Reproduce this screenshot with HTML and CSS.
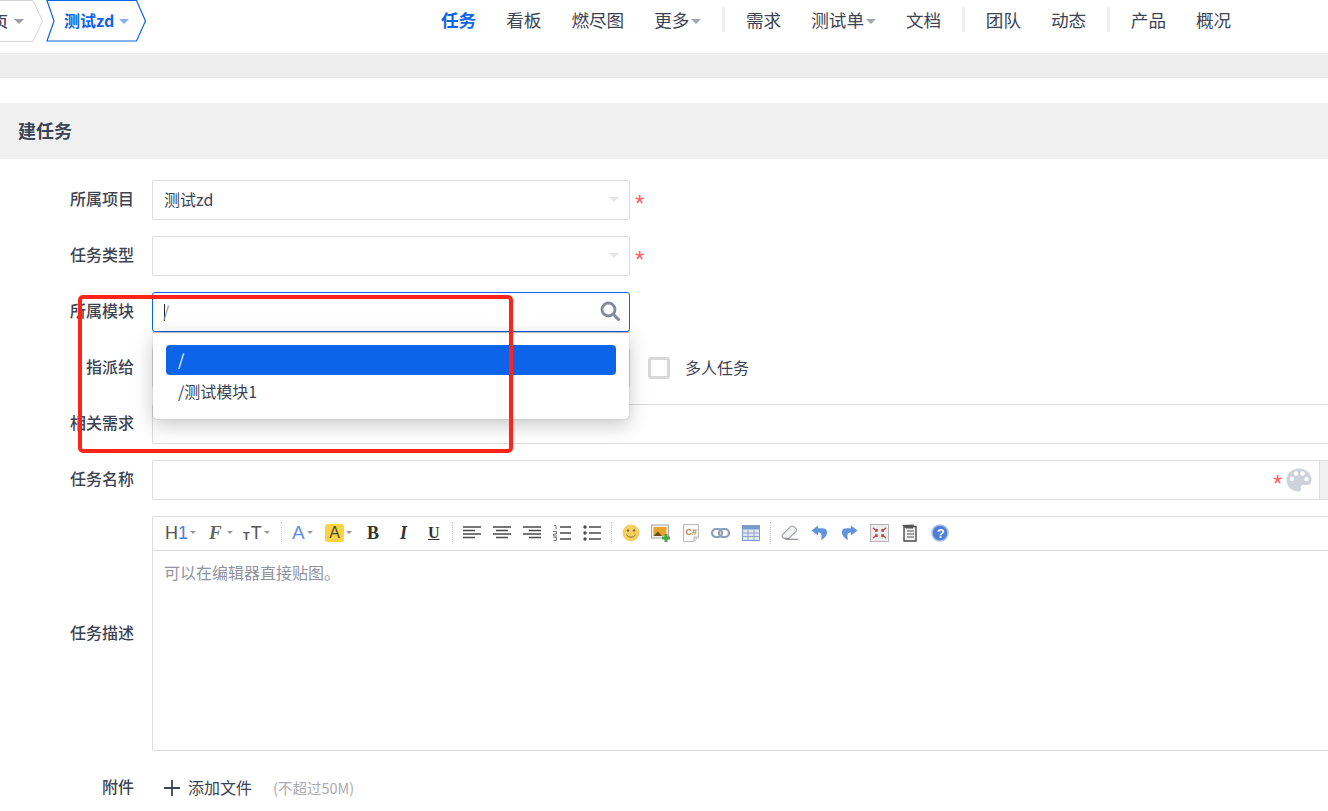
FILE: index.html
```html
<!DOCTYPE html>
<html lang="zh">
<head>
<meta charset="utf-8">
<title>建任务</title>
<link rel="stylesheet" href="styles.css">
</head>
<body>
<div class="page">
  <header class="top">
    <div class="crumbs">
      <div class="crumb crumb-home">
        <svg class="crumb-bg" width="46" height="42" viewBox="0 0 46 42"><path d="M-2 .5H33L42.500 21 33 41.500H-2" fill="none" stroke="#d4d6dc" stroke-width="1"/></svg>
        <span class="crumb-text">页</span><i class="caret caret-grey"></i>
      </div>
      <div class="crumb crumb-active">
        <svg class="crumb-bg" width="102" height="42" viewBox="0 0 102 42"><path d="M1 .5H90.500L99.500 21 90.500 41H1L8 21Z" fill="none" stroke="#0c64eb" stroke-width="1.200"/></svg>
        <span class="crumb-text">测试zd</span><i class="caret caret-blue"></i>
      </div>
    </div>
    <nav class="nav">
      <a class="nav-item active">任务</a>
      <a class="nav-item">看板</a>
      <a class="nav-item">燃尽图</a>
      <a class="nav-item">更多<i class="caret caret-nav"></i></a>
      <span class="nav-sep"></span>
      <a class="nav-item">需求</a>
      <a class="nav-item">测试单<i class="caret caret-nav"></i></a>
      <a class="nav-item">文档</a>
      <span class="nav-sep"></span>
      <a class="nav-item">团队</a>
      <a class="nav-item">动态</a>
      <span class="nav-sep"></span>
      <a class="nav-item">产品</a>
      <a class="nav-item">概况</a>
    </nav>
  </header>
  <div class="band"></div>
  <h1 class="title">建任务</h1>

  <form class="form">
    <div class="row">
      <label class="label">所属项目</label>
      <div class="field select">测试zd<i class="caret caret-pale"></i></div>
      <span class="star">*</span>
    </div>
    <div class="row">
      <label class="label">任务类型</label>
      <div class="field select"><i class="caret caret-pale"></i></div>
      <span class="star">*</span>
    </div>
    <div class="row">
      <label class="label">所属模块</label>
      <div class="select-wrap">
        <div class="field select focus"><span class="cursor"></span><span class="typed">/</span>
          <svg class="search" width="20" height="20" viewBox="0 0 20 20"><circle cx="8.500" cy="8.500" r="6.500" fill="none" stroke="#838a9d" stroke-width="2.800"/><path d="M13.500 13.500 18.500 18.500" stroke="#838a9d" stroke-width="3" stroke-linecap="round"/></svg>
        </div>
        <div class="dropdown">
          <div class="option selected">/</div>
          <div class="option">/测试模块1</div>
        </div>
      </div>
    </div>
    <div class="row">
      <label class="label">指派给</label>
      <div class="field select"></div>
      <span class="checkbox"></span>
      <span class="check-text">多人任务</span>
    </div>
    <div class="row">
      <label class="label">相关需求</label>
      <div class="field wide"></div>
    </div>
    <div class="row">
      <label class="label">任务名称</label>
      <div class="field wide name-field">
        <span class="star star-inline">*</span>
        <svg class="palette" width="26" height="24" viewBox="0 0 26 24"><path d="M13 .5C6 .5.5 5.500.5 12S6 23.500 12.500 23.500C15 23.500 15.500 22 14.800 20.500 14 18.500 15.200 17 17.500 17H21C23.800 17 25.500 15 25.500 12 25.500 5.500 20 .5 13 .5Z" fill="#cdd2dd"/><circle cx="6" cy="11" r="2.200" fill="#fff"/><circle cx="10" cy="5.500" r="2.200" fill="#fff"/><circle cx="16.500" cy="5.500" r="2.200" fill="#fff"/><circle cx="20.500" cy="11" r="2.200" fill="#fff"/></svg>
        <span class="addon"></span>
      </div>
    </div>
    <div class="row row-editor">
      <label class="label">任务描述</label>
      <div class="editor">
        <div class="toolbar">
          <span class="tool t-h1">H<b>1</b><i class="mini"></i></span>
          <span class="tool t-font"><em>F</em><i class="mini"></i></span>
          <span class="tool t-size"><small>T</small>T<i class="mini"></i></span>
          <span class="tool-sep"></span>
          <span class="tool t-color">A<i class="mini"></i></span>
          <span class="tool t-hl"><span class="hl">A</span><i class="mini"></i></span>
          <span class="tool t-b">B</span>
          <span class="tool t-i">I</span>
          <span class="tool t-u">U</span>
          <span class="tool-sep"></span>
          <svg class="ico" width="18" height="16" viewBox="0 0 18 16"><path d="M0 2H18M0 5.500H12M0 9H18M0 12.500H12" stroke="#4a4a4a" stroke-width="1.700"/></svg>
          <svg class="ico" width="18" height="16" viewBox="0 0 18 16"><path d="M0 2H18M3 5.500H15M0 9H18M3 12.500H15" stroke="#4a4a4a" stroke-width="1.700"/></svg>
          <svg class="ico" width="18" height="16" viewBox="0 0 18 16"><path d="M0 2H18M6 5.500H18M0 9H18M6 12.500H18" stroke="#4a4a4a" stroke-width="1.700"/></svg>
          <svg class="ico" width="18" height="16" viewBox="0 0 18 16"><path d="M7 2H18M7 8H18M7 14H18" stroke="#4a4a4a" stroke-width="1.500"/><path d="M1 .5H3V4M0 6.500H3.500V9H.5V11H4M.5 12.500H3.500V15.500H.5" fill="none" stroke="#777" stroke-width="1"/></svg>
          <svg class="ico" width="18" height="16" viewBox="0 0 18 16"><path d="M6 2H18M6 8H18M6 14H18" stroke="#4a4a4a" stroke-width="1.500"/><circle cx="2" cy="2" r="1.700" fill="#4a4a4a"/><circle cx="2" cy="8" r="1.700" fill="#4a4a4a"/><circle cx="2" cy="14" r="1.700" fill="#4a4a4a"/></svg>
          <span class="tool-sep sep-tight"></span>
          <svg class="ico m11" width="18" height="18" viewBox="0 0 18 18"><circle cx="9" cy="9" r="8.500" fill="#f6cf63"/><circle cx="6" cy="6.500" r="1.200" fill="#8a6a2a"/><circle cx="12" cy="6.500" r="1.200" fill="#8a6a2a"/><path d="M4.500 10.500C6 14 12 14 13.500 10.500" fill="none" stroke="#8a6a2a" stroke-width="1"/></svg>
          <svg class="ico m13" width="19" height="18" viewBox="0 0 19 18"><rect x=".5" y="1" width="17" height="13" fill="#f2f2f2" stroke="#a5a5a5"/><rect x="2.500" y="3" width="13" height="9" fill="#e8a52a"/><path d="M2.500 12 7 7.500 11 12Z" fill="#6a4a20"/><path d="M11 14H19M15 10V18" stroke="#45a845" stroke-width="3"/></svg>
          <svg class="ico" width="16" height="18" viewBox="0 0 16 18"><path d="M.5.5H15.500V13L11 17.500H.5Z" fill="#fafafa" stroke="#bbb"/><path d="M11 17.500V13H15.500" fill="#ddd" stroke="#bbb"/><text x="2.500" y="11" class="cs">C#</text></svg>
          <svg class="ico" width="19" height="10" viewBox="0 0 19 10"><rect x="1" y="1" width="10" height="8" rx="4" fill="none" stroke="#8da0bd" stroke-width="2.200"/><rect x="8" y="1" width="10" height="8" rx="4" fill="none" stroke="#8da0bd" stroke-width="2.200"/></svg>
          <svg class="ico" width="18" height="16" viewBox="0 0 18 16"><rect x=".5" y=".5" width="17" height="15" fill="#dfe8f5" stroke="#7f9cc8"/><path d="M.5 1H17.500V4.500H.5Z" fill="#7f9cc8"/><path d="M6 4.500V15M12 4.500V15M1 8H17M1 11.500H17" stroke="#8fa5c8"/></svg>
          <span class="tool-sep sep-tight"></span>
          <svg class="ico m12" width="18" height="17" viewBox="0 0 20 17"><path d="M1.500 11 10 2.500C11.500 1 13.500 1 15 2.500L16.500 4C17.500 5 17.500 6.500 16.500 7.500L8.500 15H5C2 15 .5 12.500 1.500 11Z" fill="#f3f3f3" stroke="#9a9fa8" stroke-width="1.200"/><path d="M5 16H19" stroke="#666" stroke-width="1"/></svg>
          <svg class="ico m13" width="17" height="16" viewBox="0 0 17 16"><path d="M7 .5 .5 5.500 7 10.500V7.500C10 7.500 11.500 9 10 15 15 12.500 16.500 9 16 6 15.300 3 11 3 7 3.500Z" fill="#5f93dc"/></svg>
          <svg class="ico flip" width="17" height="16" viewBox="0 0 17 16"><path d="M7 .5 .5 5.500 7 10.500V7.500C10 7.500 11.500 9 10 15 15 12.500 16.500 9 16 6 15.300 3 11 3 7 3.500Z" fill="#5f93dc"/></svg>
          <svg class="ico" width="19" height="18" viewBox="0 0 19 18"><rect x=".5" y=".5" width="18" height="17" fill="#eee" stroke="#b5b5b5"/><path d="M3 4 7 7M16 4 12 7M3 14 7 11M16 14 12 11M7 5V7H5M12 5V7H14M7 13V11H5M12 13V11H14" stroke="#c8433a" stroke-width="1.400" fill="none"/></svg>
          <svg class="ico" width="18" height="18" viewBox="0 0 18 18"><path d="M3 2.500H15V17H3Z" fill="#f2f2f2" stroke="#4a4a4a" stroke-width="1.400"/><path d="M1 1 5 4.500H12L13 .5" fill="#555"/><path d="M6 7H13M6 10H13M6 13H13" stroke="#555"/></svg>
          <svg class="ico" width="18" height="18" viewBox="0 0 18 18"><circle cx="9" cy="9" r="8" fill="#4f7fd6" stroke="#a9c0ea" stroke-width="1.500"/><text x="5.700" y="13.500" class="qm">?</text></svg>
        </div>
        <div class="editor-body">可以在编辑器直接贴图。</div>
      </div>
    </div>
    <div class="row row-file">
      <label class="label">附件</label>
      <svg class="plus" width="16" height="16" viewBox="0 0 16 16"><path d="M0 8H16M8 0V16" stroke="#3c4353" stroke-width="1.800"/></svg>
      <span class="file-text">添加文件</span>
      <span class="file-hint">(不超过50M)</span>
    </div>
  </form>
  <div class="highlight"></div>
</div>
</body>
</html>
```

FILE: styles.css
```css
* { box-sizing: border-box; }
html, body { margin: 0; padding: 0; background: #fff; }
body {
  font-family: "Noto Sans CJK SC", "Noto Sans", "Liberation Sans", sans-serif;
  color: #3c4353;
  font-size: 16px;
}
.page { position: relative; width: 1328px; height: 811px; overflow: hidden; }

.top { display: flex; height: 53px; align-items: flex-start; }
.crumbs { display: flex; width: 441px; }
.crumb { position: relative; height: 42px; padding-bottom: 2px; display: flex; align-items: center; }
.crumb-bg { position: absolute; left: 0; top: 0; }
.crumb-home { width: 46px; }
.crumb-home .crumb-text { margin-left: -7px; font-weight: 500; font-size: 15px; }
.crumb-active { width: 102px; color: #0c64eb; font-weight: 700; font-size: 16px; }
.crumb-active .crumb-text { margin-left: 18px; }
.caret { display: inline-block; width: 0; height: 0; border-style: solid; border-color: transparent; border-width: 5px 5px 0; }
.caret-grey { border-top-color: #9a9da6; margin-left: 6px; margin-top: 2px; }
.caret-blue { border-top-color: #86b0f4; margin-left: 5px; margin-top: 2px; }
.caret-nav { border-top-color: #a3a6ae; border-width: 5.500px 5px 0; margin-left: 2px; vertical-align: 3px; }
.caret-pale { border-top-color: #e6e7ec; margin-left: auto; }

.nav { display: flex; align-items: flex-start; height: 42px; }
.nav-item { font-size: 17.600px; line-height: 40px; color: #3c4353; margin-right: 30px; white-space: nowrap; }
.nav-item.active { color: #0c64eb; font-weight: 700; }
.nav-sep { width: 3px; height: 25px; background: #eeeeee; margin: 7px 20.600px 0 -9px; }

.band { height: 25px; background: #eeeeee; border-bottom: 1px solid #e6e6e6; }
.title { margin: 25px 0 0; height: 56px; background: #f0f0f0; padding-left: 18px; font-size: 18px; font-weight: 700; line-height: 54px; color: #3c4353; }

.form { display: flex; flex-direction: column; gap: 16px; padding-top: 21px; }
.row { display: flex; align-items: center; height: 40px; }
.label { width: 134px; text-align: right; margin-right: 18px; flex: none; font-weight: 500; font-size: 16px; white-space: nowrap; padding-bottom: 4px; }
.field { height: 40px; border: 1px solid #dcdcdc; border-radius: 2px; background: #fff; flex: none; display: flex; align-items: center; padding: 0 11px; }
.select { width: 478px; font-size: 16px; padding-bottom: 2px; }
.select .caret { margin-right: -1px; }
.select-wrap { position: relative; width: 478px; height: 40px; }
.focus { border-color: #0c64eb; border-radius: 3px; position: relative; }
.typed { color: #8a8f9c; margin-left: -2px; }
.cursor { width: 1px; height: 17px; background: #222; margin-top: 2px; }
.search { margin-left: auto; margin-right: -2px; }
.star { color: #ff5c5c; font-family: "Liberation Sans", sans-serif; font-size: 24px; margin-left: 5px; line-height: 1; padding-top: 7px; }
.wide { width: 1300px; }
.name-field { position: relative; }
.star-inline { margin-left: 1109px; }
.palette { margin-left: 4px; }
.addon { position: absolute; left: 1166px; top: 0; height: 38px; width: 120px; border-left: 1px solid #dcdcdc; background: #f0f0f0; }

.dropdown { position: absolute; z-index: 2; left: 1px; top: 40px; width: 476px; height: 87px; background: #fff; border-radius: 0 0 4px 4px; border-top: 1px solid #b8b8b8; box-shadow: 0 6px 20px rgba(0,0,0,.22), 0 0 1px rgba(0,0,0,.5); padding: 12px 13px 0 13px; }
.option { height: 30px; line-height: 28px; padding-left: 12px; font-size: 16px; margin-bottom: 2px; color: #3c4353; }
.option.selected { background: #0c64eb; color: #fff; border-radius: 4px; }

.checkbox { width: 22px; height: 22px; border: 3px solid #d8d8d8; border-radius: 3px; margin-left: 18px; flex: none; }
.check-text { margin-left: 15px; font-size: 16px; padding-bottom: 2px; }

.row-editor { height: 235px; }
.editor { border: 1px solid #dcdcdc; border-radius: 2px; width: 1300px; height: 235px; flex: none; }
.toolbar { display: flex; align-items: center; height: 34px; border-bottom: 1px solid #dcdcdc; padding: 0 0 2px 12px; font-family: "Liberation Sans", sans-serif; }
.tool { display: inline-flex; align-items: center; font-size: 18px; color: #555; line-height: 1; flex: none; }
.tool b { color: #4f7fd6; font-weight: 400; }
.mini { display: inline-block; width: 0; height: 0; border-style: solid; border-color: transparent; border-top-color: #999; border-width: 3.500px 3.500px 0; margin-left: 2px; }
.t-h1 { width: 42px; }
.t-font { width: 36px; }
.t-font em { font-family: "Liberation Serif", serif; font-size: 19px; font-weight: 700; color: #666; padding-left: 2px; padding-right: 3px; }
.t-size { width: 38px; }
.t-size small { font-size: 11px; font-weight: 700; align-self: flex-end; margin-right: 1px; }
.tool-sep { width: 1px; height: 22px; border-left: 1px dotted #c8c8c8; margin-right: 10px; flex: none; }
.t-color { color: #5b8def; font-size: 19px; width: 33px; }
.t-hl { width: 42px; }
.hl { background: #fbd342; border-radius: 3px; width: 19px; height: 18px; display: inline-flex; align-items: center; justify-content: center; font-size: 16px; color: #4a4a3a; }
.t-b { font-family: "Liberation Serif", serif; font-weight: 700; font-size: 18px; color: #333; width: 30px; }
.t-i { font-family: "Liberation Serif", serif; font-weight: 700; font-style: italic; font-size: 18px; color: #333; width: 30px; padding-left: 3px; }
.t-u { font-family: "Liberation Serif", serif; font-weight: 700; text-decoration: underline; font-size: 16px; color: #333; width: 25px; padding-left: 1px; }
.ico { flex: none; margin-right: 12px; }
.m11 { margin-right: 11px; }
.m12 { margin-right: 12px; }
.m13 { margin-right: 13px; }
.flip { transform: scaleX(-1); }
.sep-tight { margin-left: -2px; }
.cs { font: 700 9px "Liberation Sans", sans-serif; fill: #a98a5f; }
.qm { font: 700 13px "Liberation Sans", sans-serif; fill: #fff; }
.editor-body { padding: 10px 11px; font-size: 16px; line-height: 22px; color: #8f939e; }

.row-file { margin-top: 1px; }
.plus { margin-left: 12px; flex: none; }
.file-text { margin-left: 8px; font-size: 16px; white-space: nowrap; padding-bottom: 2px; }
.file-hint { margin-left: 21px; font-size: 14.500px; color: #a9abb2; white-space: nowrap; padding-bottom: 2px; }

.highlight { position: absolute; z-index: 3; left: 78px; top: 295px; width: 435px; height: 158px; border: 4px solid #ff2419; border-radius: 5px; }
```
